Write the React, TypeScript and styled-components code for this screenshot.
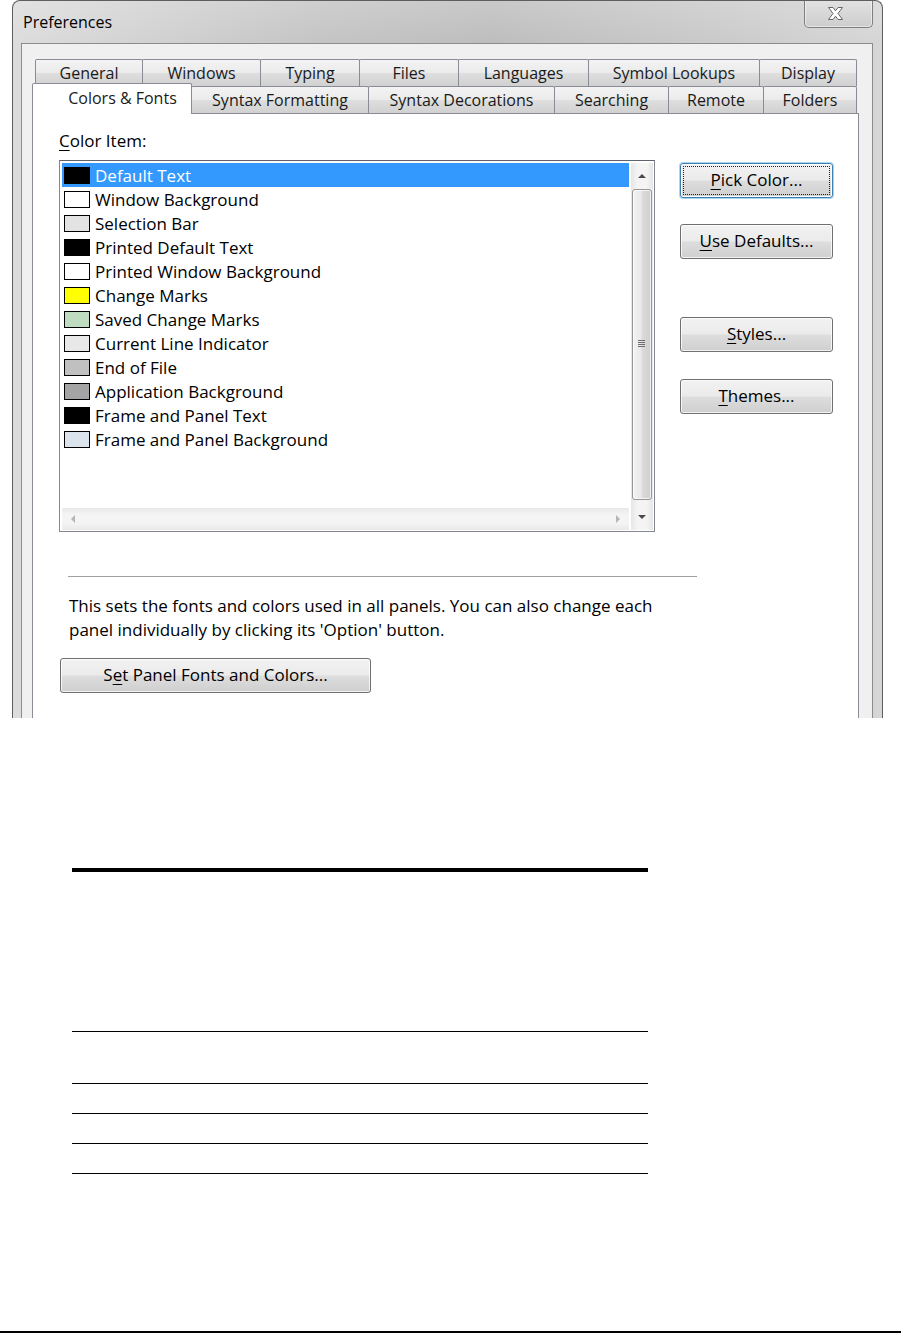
import React from "react";
import styled, { createGlobalStyle, css } from "styled-components";

const FONT = `"Open Sans", "Noto Sans", "DejaVu Sans", sans-serif`;

const GlobalStyle = createGlobalStyle`
  html, body {
    margin: 0;
    padding: 0;
    background: #fff;
  }
  body {
    font-family: ${FONT};
    color: #000;
  }
`;

const Page = styled.div`
  width: 901px;
  min-height: 1333px;
  display: flex;
  flex-direction: column;
  background: #fff;
`;

// Window frame
const Dialog = styled.div`
  margin-left: 12px;
  width: 871px;
  height: 718px;
  box-sizing: border-box;
  border: 1px solid #5e5e5e;
  border-bottom: none;
  border-radius: 8px 8px 0 0;
  background:
    linear-gradient(to bottom, rgba(255, 255, 255, 0.18), rgba(255, 255, 255, 0) 44px),
    linear-gradient(to right, #dcdcdc, #c4c4c4 35%, #bdbdbd 55%, #c9c9c9 80%, #d6d6d6);
  padding: 0 9px 0 8px;
  display: flex;
  flex-direction: column;
  overflow: hidden;
`;

const TitleBar = styled.div`
  height: 42px;
  display: flex;
  align-items: flex-start;
  justify-content: space-between;
`;

const Title = styled.div`
  margin: 10px 0 0 2px;
  font-size: 16px;
  line-height: 22px;
  color: #000;
`;

const CloseButton = styled.div`
  margin: -1px 0 0 0;
  width: 69px;
  height: 28px;
  box-sizing: border-box;
  border: 1px solid #7e7e7e;
  border-top: none;
  border-radius: 0 0 5px 5px;
  background: linear-gradient(#e2e2e2, #cdcdcd);
  box-shadow: inset 0 0 0 1px rgba(255, 255, 255, 0.5);
  display: flex;
  align-items: center;
  justify-content: center;
  padding-right: 6px;
`;

const Client = styled.div`
  flex: 1;
  border: 1px solid #8c8c8c;
  border-bottom: none;
  background: #f0f0f0;
  display: flex;
  flex-direction: column;
`;

// Tabs
const TabStrip = styled.div`
  padding-top: 15px;
  display: flex;
  flex-direction: column;
`;

const TabRow = styled.div<{ $indent: number; $front?: boolean }>`
  display: flex;
  align-items: flex-end;
  margin-left: ${(p) => p.$indent}px;
  height: ${(p) => (p.$front ? 30 : 27)}px;
  margin-top: ${(p) => (p.$front ? -3 : 0)}px;
  position: relative;
`;

const Tab = styled.div<{ $w: number; $active?: boolean }>`
  width: ${(p) => p.$w}px;
  height: 27px;
  margin-right: -1px;
  box-sizing: border-box;
  border: 1px solid #898c95;
  border-bottom: none;
  border-radius: 2px 2px 0 0;
  background: linear-gradient(#f3f3f3 0%, #ebebeb 48%, #dedede 52%, #d1d1d1 100%);
  display: flex;
  align-items: center;
  justify-content: center;
  font-size: 16px;
  color: #1a1a1a;
  white-space: nowrap;
  ${(p) =>
    p.$active &&
    css`
      height: 31px;
      margin-bottom: -1px;
      background: #fff;
      position: relative;
      z-index: 2;
      padding: 0 0 3px 21px;
    `}
`;

const Panel = styled.div`
  flex: 1;
  margin: 0 13px 0 10px;
  border: 1px solid #898c95;
  border-bottom: none;
  background: #fff;
  padding: 16px 0 0 26px;
  display: flex;
  flex-direction: column;
  align-items: flex-start;
`;

const FieldLabel = styled.div`
  font-size: 17px;
  line-height: 22px;
  height: 22px;
  margin-bottom: 8px;
`;

const Mnemonic = styled.span`
  text-decoration: underline;
  text-underline-offset: 3px;
  text-decoration-thickness: 1px;
`;

const MainRow = styled.div`
  display: flex;
  align-items: flex-start;
`;

// List box
const ListBox = styled.div`
  width: 596px;
  height: 372px;
  box-sizing: border-box;
  border: 1px solid #828790;
  border-top-color: #60636b;
  padding: 2px 1px 1px 2px;
  display: flex;
  background: #fff;
`;

const ItemsPane = styled.div`
  flex: 1;
  margin-right: 2px;
  display: flex;
  flex-direction: column;
`;

const Items = styled.div`
  flex: 1;
`;

const ItemRow = styled.div<{ $selected?: boolean }>`
  height: 24px;
  display: flex;
  align-items: center;
  padding-left: 2px;
  font-size: 17px;
  white-space: nowrap;
  background: ${(p) => (p.$selected ? "#3399ff" : "transparent")};
  color: ${(p) => (p.$selected ? "#fff" : "#000")};
`;

const Swatch = styled.span<{ $color: string }>`
  width: 26px;
  height: 17px;
  box-sizing: border-box;
  border: 1px solid #000;
  background: ${(p) => p.$color};
  margin-right: 5px;
  flex-shrink: 0;
`;

const HScroll = styled.div`
  height: 22px;
  display: flex;
  align-items: center;
  justify-content: space-between;
  padding: 0 9px;
  background: linear-gradient(#e9e9e9, #f4f4f4 30%, #f4f4f4 70%, #e9e9e9);
`;

const VScroll = styled.div`
  width: 22px;
  display: flex;
  flex-direction: column;
  background: linear-gradient(to right, #e6e6e6, #f4f4f4 30%, #f4f4f4 70%, #e6e6e6);
`;

const ArrowCell = styled.div`
  height: 26px;
  display: flex;
  align-items: center;
  justify-content: center;
`;

const Arrow = styled.span<{ $dir: "up" | "down" | "left" | "right"; $dim?: boolean }>`
  width: 0;
  height: 0;
  ${(p) => {
    const c = p.$dim ? "#b4b4b4" : "#4a4a4a";
    switch (p.$dir) {
      case "up":
        return css`
          border-left: 4px solid transparent;
          border-right: 4px solid transparent;
          border-bottom: 4px solid ${c};
        `;
      case "down":
        return css`
          border-left: 4px solid transparent;
          border-right: 4px solid transparent;
          border-top: 4px solid ${c};
        `;
      case "left":
        return css`
          border-top: 4px solid transparent;
          border-bottom: 4px solid transparent;
          border-right: 4px solid ${c};
        `;
      default:
        return css`
          border-top: 4px solid transparent;
          border-bottom: 4px solid transparent;
          border-left: 4px solid ${c};
        `;
    }
  }}
`;

const Thumb = styled.div`
  flex: 1;
  margin: 0 1px 4px;
  border: 1px solid #979797;
  border-radius: 3px;
  background: linear-gradient(to right, #f4f4f4, #e8e8e8 45%, #d9d9d9 55%, #cfcfcf);
  box-shadow: inset 0 0 0 1px rgba(255, 255, 255, 0.7);
  display: flex;
  align-items: center;
  justify-content: center;
`;

// Buttons
const ButtonColumn = styled.div`
  margin-left: 25px;
  padding-top: 3px;
  display: flex;
  flex-direction: column;
`;

const Button = styled.button<{ $w?: number; $mt?: number; $ml?: number; $focused?: boolean }>`
  width: ${(p) => p.$w ?? 153}px;
  height: 35px;
  margin: ${(p) => p.$mt ?? 0}px 0 0 ${(p) => p.$ml ?? 0}px;
  padding: 0 0 2px;
  box-sizing: border-box;
  border: 1px solid #707070;
  border-radius: 3px;
  background: linear-gradient(#f2f2f2 0%, #ebebeb 48%, #dddddd 52%, #cfcfcf 100%);
  box-shadow: inset 0 0 0 1px rgba(255, 255, 255, 0.75);
  font-family: ${FONT};
  font-size: 17px;
  color: #000;
  position: relative;
  ${(p) =>
    p.$focused &&
    css`
      border-color: #3c7fb1;
      box-shadow: 0 0 0 1px #a7d7f2, inset 0 0 0 1px #fff;
      &::after {
        content: "";
        position: absolute;
        inset: 2px;
        border: 1px dotted #222;
        border-radius: 1px;
      }
    `}
`;

const Separator = styled.div`
  margin: 44px 0 0 9px;
  width: 629px;
  height: 0;
  border-top: 1px solid #a0a0a0;
  border-bottom: 1px solid #fff;
`;

const Description = styled.p`
  margin: 16px 0 0 10px;
  font-size: 17px;
  line-height: 24px;
`;

// Document below the screenshot
const DocTable = styled.div`
  margin: 150px 0 0 72px;
  width: 576px;
  border-top: 4px solid #000;
`;

const DocRow = styled.div<{ $h: number }>`
  height: ${(p) => p.$h}px;
  border-bottom: 1px solid #000;
`;

const Footer = styled.div`
  margin-top: auto;
  height: 0;
  border-top: 2px solid #000;
`;

const row1 = [
  { label: "General", w: 108 },
  { label: "Windows", w: 119 },
  { label: "Typing", w: 100 },
  { label: "Files", w: 100 },
  { label: "Languages", w: 131 },
  { label: "Symbol Lookups", w: 172 },
  { label: "Display", w: 98 },
];

const row2 = [
  { label: "Colors & Fonts", w: 160, active: true },
  { label: "Syntax Formatting", w: 178 },
  { label: "Syntax Decorations", w: 187 },
  { label: "Searching", w: 115 },
  { label: "Remote", w: 96 },
  { label: "Folders", w: 94 },
];

const colorItems = [
  { name: "Default Text", color: "#000000" },
  { name: "Window Background", color: "#ffffff" },
  { name: "Selection Bar", color: "#e3e3e3" },
  { name: "Printed Default Text", color: "#000000" },
  { name: "Printed Window Background", color: "#ffffff" },
  { name: "Change Marks", color: "#ffff00" },
  { name: "Saved Change Marks", color: "#c0dcc0" },
  { name: "Current Line Indicator", color: "#e8e8e8" },
  { name: "End of File", color: "#c0c0c0" },
  { name: "Application Background", color: "#a4a4a4" },
  { name: "Frame and Panel Text", color: "#000000" },
  { name: "Frame and Panel Background", color: "#dbe3ec" },
];

const CloseGlyph = () => (
  <svg width="17" height="13" viewBox="0 0 17 13">
    <path
      d="M1.5 0.5H6L8.5 3.8L11 0.5H15.5L11 6.5L15.5 12.5H11L8.5 9.2L6 12.5H1.5L6 6.5Z"
      fill="#fff"
      stroke="#666"
      strokeWidth="1"
      strokeLinejoin="round"
    />
  </svg>
);

const Grip = () => (
  <svg width="8" height="9" viewBox="0 0 8 9">
    {[0, 2, 4, 6].map((y) => (
      <rect key={y} x="0" y={y} width="7" height="1" fill="#6f6f6f" />
    ))}
  </svg>
);

const App = () => {
  return (
    <Page>
      <GlobalStyle />
      <Dialog>
        <TitleBar>
          <Title>Preferences</Title>
          <CloseButton>
            <CloseGlyph />
          </CloseButton>
        </TitleBar>
        <Client>
          <TabStrip>
            <TabRow $indent={13}>
              {row1.map((t) => (
                <Tab key={t.label} $w={t.w}>
                  {t.label}
                </Tab>
              ))}
            </TabRow>
            <TabRow $indent={10} $front>
              {row2.map((t) => (
                <Tab key={t.label} $w={t.w} $active={t.active}>
                  {t.label}
                </Tab>
              ))}
            </TabRow>
          </TabStrip>
          <Panel>
            <FieldLabel>
              <Mnemonic>C</Mnemonic>olor Item:
            </FieldLabel>
            <MainRow>
              <ListBox>
                <ItemsPane>
                  <Items>
                    {colorItems.map((item, i) => (
                      <ItemRow key={item.name} $selected={i === 0}>
                        <Swatch $color={item.color} />
                        {item.name}
                      </ItemRow>
                    ))}
                  </Items>
                  <HScroll>
                    <Arrow $dir="left" $dim />
                    <Arrow $dir="right" $dim />
                  </HScroll>
                </ItemsPane>
                <VScroll>
                  <ArrowCell>
                    <Arrow $dir="up" />
                  </ArrowCell>
                  <Thumb>
                    <Grip />
                  </Thumb>
                  <ArrowCell>
                    <Arrow $dir="down" />
                  </ArrowCell>
                </VScroll>
              </ListBox>
              <ButtonColumn>
                <Button $focused>
                  <Mnemonic>P</Mnemonic>ick Color...
                </Button>
                <Button $mt={26}>
                  <Mnemonic>U</Mnemonic>se Defaults...
                </Button>
                <Button $mt={58}>
                  <Mnemonic>S</Mnemonic>tyles...
                </Button>
                <Button $mt={27}>
                  <Mnemonic>T</Mnemonic>hemes...
                </Button>
              </ButtonColumn>
            </MainRow>
            <Separator />
            <Description>
              This sets the fonts and colors used in all panels. You can also change each
              <br />
              panel individually by clicking its 'Option' button.
            </Description>
            <Button $w={311} $mt={16} $ml={1}>
              S<Mnemonic>e</Mnemonic>t Panel Fonts and Colors...
            </Button>
          </Panel>
        </Client>
      </Dialog>
      <DocTable>
        <DocRow $h={159} />
        <DocRow $h={51} />
        <DocRow $h={29} />
        <DocRow $h={29} />
        <DocRow $h={29} />
      </DocTable>
      <Footer />
    </Page>
  );
};

export default App;
